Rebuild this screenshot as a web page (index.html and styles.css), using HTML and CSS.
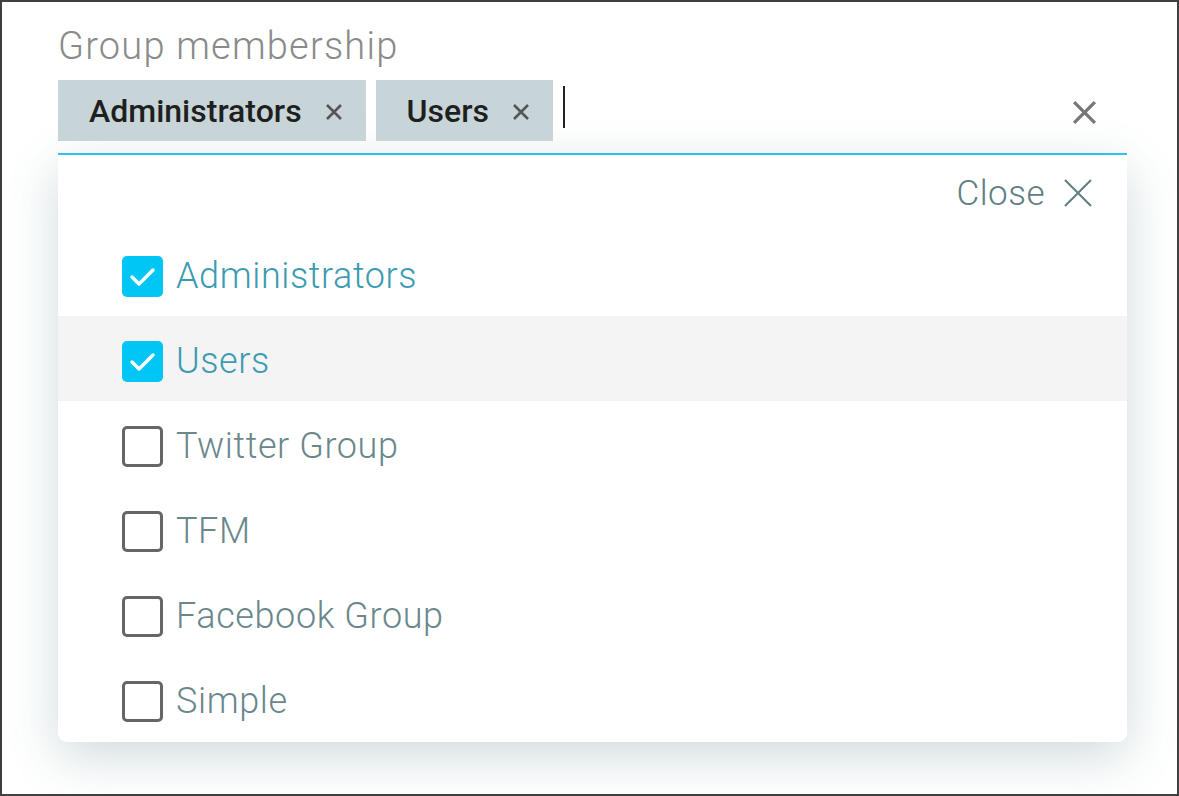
FILE: index.html
```html
<!DOCTYPE html>
<html lang="en">
<head>
<meta charset="UTF-8">
<meta name="viewport" content="width=device-width, initial-scale=1.0">
<title>Group membership</title>
<link rel="stylesheet" href="styles.css">
</head>
<body>
<div class="frame">
    <div class="field">
        <div class="field-label">Group membership</div>
        <div class="input">
            <div class="chip">
                <span>Administrators</span>
                <svg class="chip-x" viewBox="0 0 20 20"><path d="M3 3L17 17M17 3L3 17"/></svg>
            </div>
            <div class="chip">
                <span>Users</span>
                <svg class="chip-x" viewBox="0 0 20 20"><path d="M3 3L17 17M17 3L3 17"/></svg>
            </div>
            <div class="cursor"></div>
            <svg class="clear-x" viewBox="0 0 26 26"><path d="M3 3L23 23M23 3L3 23"/></svg>
        </div>

        <div class="dropdown">
            <div class="close-row">
                <span>Close</span>
                <svg class="close-x" viewBox="0 0 30 30"><path d="M2 2L28 28M28 2L2 28"/></svg>
            </div>
            <div class="option checked">
                <span class="box"><svg viewBox="0 0 41 41"><path d="M10 21L17 28L31 14"/></svg></span>
                <span class="text">Administrators</span>
            </div>
            <div class="option checked active">
                <span class="box"><svg viewBox="0 0 41 41"><path d="M10 21L17 28L31 14"/></svg></span>
                <span class="text">Users</span>
            </div>
            <div class="option">
                <span class="box"></span>
                <span class="text">Twitter Group</span>
            </div>
            <div class="option">
                <span class="box"></span>
                <span class="text">TFM</span>
            </div>
            <div class="option">
                <span class="box"></span>
                <span class="text">Facebook Group</span>
            </div>
            <div class="option">
                <span class="box"></span>
                <span class="text">Simple</span>
            </div>
        </div>
    </div>
</div>
</body>
</html>
```

FILE: styles.css
```css
body {
    margin: 0;
    font-family: Roboto, "Liberation Sans", sans-serif;
    background-color: #fff;
}

.frame {
    box-sizing: border-box;
    width: 1179px;
    height: 796px;
    border: 2px solid #404040;
    padding: 22px 0 0 56px;
    overflow: hidden;
}

.field {
    width: 1069px;
}

.field-label {
    font-size: 38px;
    font-weight: 300;
    letter-spacing: 1.2px;
    color: #8a8a8a;
    line-height: 44px;
    margin-bottom: 12px;
}

.input {
    display: flex;
    align-items: center;
    gap: 10px;
    padding-bottom: 12px;
    border-bottom: 2px solid #2ec6f2;
}

.chip {
    display: flex;
    align-items: center;
    height: 61px;
    padding: 0 22px 0 31px;
    background-color: #c7d5d9; /* grey-blue chip */
    color: #1f1f1f;
    font-size: 32px;
    font-weight: 500;
}

.chip-x {
    width: 20px;
    height: 20px;
    margin-left: 22px;
    margin-top: 2px;
    fill: none;
    stroke: #555;
    stroke-width: 2.6;
}

.cursor {
    width: 2px;
    height: 42px;
    background-color: #222;
    margin-top: -8px;
}

.clear-x {
    width: 27px;
    height: 27px;
    margin-left: auto;
    margin-right: 29px;
    margin-top: 4px;
    fill: none;
    stroke: #777;
    stroke-width: 3.2;
}

.dropdown {
    background-color: #fff;
    border-radius: 0 0 9px 9px;
    box-shadow: 0 14px 50px rgba(60, 100, 110, 0.24);
    padding-bottom: 1px;
}

.close-row {
    display: flex;
    justify-content: flex-end;
    align-items: center;
    gap: 18px;
    height: 76px;
    padding-right: 34px;
    font-size: 35px;
    font-weight: 300;
    letter-spacing: 0.5px;
    color: #5e7e84;
}

.close-x {
    width: 30px;
    height: 30px;
    fill: none;
    stroke: #5e7e84;
    stroke-width: 2;
}

.option {
    box-sizing: border-box;
    display: flex;
    align-items: center;
    height: 85px;
    padding: 5px 0 0 64px;
    font-size: 36px;
    font-weight: 300;
    letter-spacing: 0.6px;
    color: #6a878c;
}

.option.active {
    background-color: #f4f4f4;
}

.box {
    box-sizing: border-box;
    width: 41px;
    height: 41px;
    border: 3px solid #666;
    border-radius: 5px;
    margin-right: 13px;
    display: flex;
}

.box svg {
    width: 41px;
    height: 41px;
    fill: none;
    stroke: #fff;
    stroke-width: 3.4;
    stroke-linecap: round;
    stroke-linejoin: round;
}

.option.checked .box {
    border: none;
    background-color: #00c6f6; /* cyan checkbox */
}

.option.checked .text {
    color: #3b9bb2;
}
```
